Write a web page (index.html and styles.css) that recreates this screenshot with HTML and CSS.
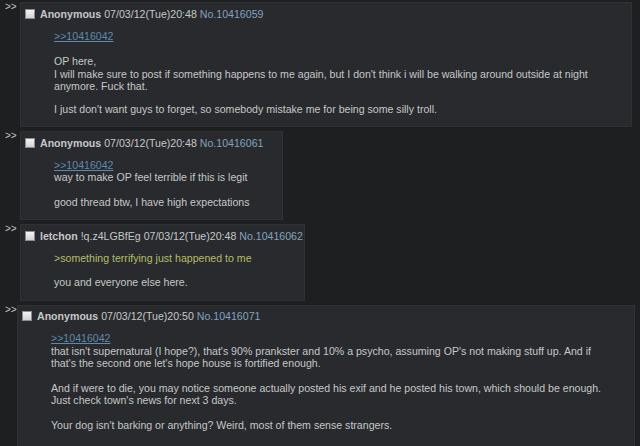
FILE: index.html
```html
<!DOCTYPE html>
<html>
<head>
<meta charset="utf-8">
<link rel="stylesheet" href="styles.css">
</head>
<body>
<div class="thread">
  <div class="row">
    <div class="side">&gt;&gt;</div>
    <div class="post w1">
      <div class="head"><span class="cb"></span><span class="name">Anonymous</span> <span class="date">07/03/12(Tue)20:48</span> <span class="no">No.10416059</span></div>
      <div class="msg">
        <a class="ql">&gt;&gt;10416042</a>
        <div class="para big">OP here,<br>I will make sure to post if something happens to me again, but I don't think i will be walking around outside at night<br>anymore. Fuck that.</div>
        <div class="para tight">I just don't want guys to forget, so somebody mistake me for being some silly troll.</div>
      </div>
    </div>
  </div>
  <div class="row">
    <div class="side">&gt;&gt;</div>
    <div class="post w2">
      <div class="head"><span class="cb"></span><span class="name">Anonymous</span> <span class="date">07/03/12(Tue)20:48</span> <span class="no">No.10416061</span></div>
      <div class="msg">
        <a class="ql">&gt;&gt;10416042</a>
        <div>way to make OP feel terrible if this is legit</div>
        <div class="para">good thread btw, I have high expectations</div>
      </div>
    </div>
  </div>
  <div class="row">
    <div class="side">&gt;&gt;</div>
    <div class="post w3">
      <div class="head"><span class="cb"></span><span class="name">letchon</span> <span class="date">!q.z4LGBfEg 07/03/12(Tue)20:48</span> <span class="no">No.10416062</span></div>
      <div class="msg">
        <div class="green">&gt;something terrifying just happened to me</div>
        <div class="para">you and everyone else here.</div>
      </div>
    </div>
  </div>
  <div class="row r4">
    <div class="side">&gt;&gt;</div>
    <div class="post w4">
      <div class="head"><span class="cb"></span><span class="name">Anonymous</span> <span class="date">07/03/12(Tue)20:50</span> <span class="no">No.10416071</span></div>
      <div class="msg">
        <a class="ql">&gt;&gt;10416042</a>
        <div>that isn't supernatural (I hope?), that's 90% prankster and 10% a psycho, assuming OP's not making stuff up. And if<br>that's the second one let's hope house is fortified enough.</div>
        <div class="para">And if were to die, you may notice someone actually posted his exif and he posted his town, which should be enough.<br>Just check town's news for next 3 days.</div>
        <div class="para">Your dog isn't barking or anything? Weird, most of them sense strangers.</div>
      </div>
    </div>
  </div>
</div>
</body>
</html>
```
FILE: styles.css
```css
html, body {
  margin: 0;
  padding: 0;
  background: #1d1f21;
  height: 100%;
  overflow: hidden;
}
.thread {
  padding-top: 2px;
  font-family: "Liberation Sans", Arial, sans-serif;
  font-size: 10.6px;
  line-height: 12.5px;
  color: #c5c8c6;
  display: flex;
  flex-direction: column;
  gap: 4px;
}
.row {
  display: flex;
  align-items: flex-start;
}
.side {
  width: 20px;
  flex: none;
  box-sizing: border-box;
  padding-left: 5px;
  font-size: 10px;
  line-height: 10px;
  color: #c5c8c6;
}
.r4 .side {
  width: 17px;
}
.post {
  background: #282a2e;
  border: 1px solid #2f3135;
  padding: 4.5px 4px 11px 4px;
  white-space: nowrap;
  box-sizing: border-box;
}
.w1 {
  width: 612px;
}
.w2 {
  width: 263px;
}
.w3 {
  width: 285px;
}
.w4 {
  width: 618px;
  padding-bottom: 20px;
}
.head {
  white-space: pre;
}
.cb {
  display: inline-block;
  vertical-align: -1px;
  width: 8px;
  height: 8px;
  border: 1px solid #8a8c8e;
  background: linear-gradient(#f4f4f4, #d2d2d2);
  margin-right: 5px;
}
.name {
  font-weight: bold;
}
.no {
  color: #81a2be;
}
.msg {
  margin: 9.5px 0 0 29px;
}
.ql {
  display: block;
  color: #5f89ac;
  text-decoration: underline;
}
.para {
  margin-top: 12px;
}
.para.big {
  margin-top: 13px;
}
.para.tight {
  margin-top: 10px;
}
.green {
  color: #b5bd68;
}
```
